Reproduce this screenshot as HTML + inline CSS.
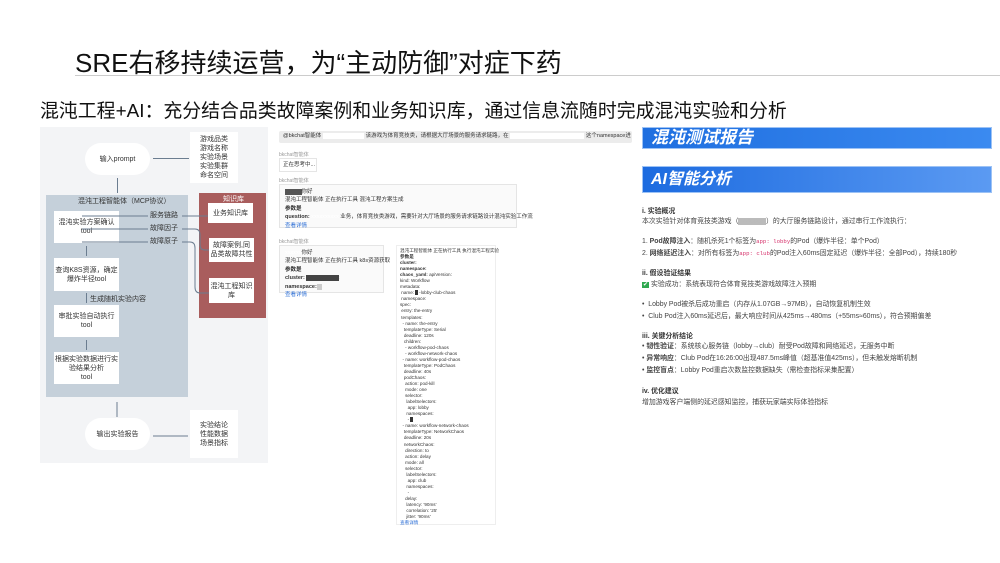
<!DOCTYPE html><html><head><meta charset="utf-8"><style>
*{margin:0;padding:0;box-sizing:border-box}
body{width:1000px;height:563px;background:#fff;position:relative;overflow:hidden;font-family:"Liberation Sans","Noto Sans CJK SC",sans-serif;color:#222}
.a{position:absolute}
.wb{position:absolute;background:#fff;display:flex;align-items:center;justify-content:center;text-align:center;font-size:7px;line-height:9px;color:#333}
.lbl{position:absolute;font-size:7px;color:#333}
.t{font-size:5.5px;color:#333;line-height:8.4px;white-space:nowrap}
.g{color:#999;font-size:5px}
.r{font-size:6.9px;color:#444;white-space:nowrap;position:absolute;left:642px}
.b{font-weight:bold;color:#333}
.pk{color:#d6336c;font-family:"Liberation Mono",monospace;font-size:5.7px}
</style></head><body>
<div class="a" style="left:75px;top:43px;font-size:26px;color:#111">SRE右移持续运营，为“主动防御”对症下药</div>
<div class="a" style="left:75px;top:75px;width:925px;height:1px;background:#ccc"></div>
<div class="a" style="left:40px;top:96px;font-size:18.9px;color:#111">混沌工程+AI：充分结合品类故障案例和业务知识库，通过信息流随时完成混沌实验和分析</div>

<!-- left diagram -->
<div class="a" style="left:40px;top:127px;width:228px;height:336px;background:#f3f4f6"></div>
<div class="wb" style="left:85px;top:143px;width:65px;height:32px;border-radius:16px">输入prompt</div>
<div class="wb" style="left:190px;top:132px;width:48px;height:51px">游戏品类<br>游戏名称<br>实验场景<br>实验集群<br>命名空间</div>
<div class="a" style="left:153px;top:158px;width:36px;height:1px;background:#6b7d90"></div>
<div class="a" style="left:117px;top:178px;width:1px;height:15px;background:#6b7d90"></div>
<div class="a" style="left:46px;top:195px;width:142px;height:202px;background:#c5d0da"></div>
<div class="lbl" style="left:78px;top:196px">混沌工程智能体（MCP协议）</div>
<div class="wb" style="left:54px;top:211px;width:65px;height:32px">混沌实验方案确认<br>tool</div>
<div class="wb" style="left:54px;top:258px;width:65px;height:33px">查询K8S资源，确定<br>爆炸半径tool</div>
<div class="wb" style="left:54px;top:305px;width:65px;height:32px">审批实验自动执行<br>tool</div>
<div class="wb" style="left:54px;top:352px;width:65px;height:32px">根据实验数据进行实<br>验结果分析<br>tool</div>
<div class="a" style="left:86px;top:246px;width:1px;height:10px;background:#6b7d90"></div>
<div class="a" style="left:86px;top:293px;width:1px;height:10px;background:#6b7d90"></div>
<div class="a" style="left:86px;top:340px;width:1px;height:10px;background:#6b7d90"></div>
<div class="lbl" style="left:90px;top:294px">生成随机实验内容</div>
<div class="a" style="left:199px;top:193px;width:67px;height:125px;background:#a95d5d"></div>
<div class="lbl" style="left:223px;top:194px;color:#fff">知识库</div>
<div class="wb" style="left:208px;top:203px;width:45px;height:20px">业务知识库</div>
<div class="wb" style="left:209px;top:238px;width:45px;height:24px">故障案例,同<br>品类故障共性</div>
<div class="wb" style="left:209px;top:278px;width:45px;height:25px">混沌工程知识<br>库</div>
<svg class="a" style="left:40px;top:127px" width="228" height="336"><g fill="none" stroke="#6b7d90" stroke-width="1">
<path d="M42 89H108M142 89H168"/><path d="M42 102H108M142 102H155Q160 102 160 108V118Q160 123 165 123H169"/><path d="M42 115H108M142 115H150Q155 115 155 121V160Q155 166 160 166H169"/>
<path d="M77 275V290M113 309H148"/></g></svg>
<div class="lbl" style="left:150px;top:210px;background:#c5d0da">服务链路</div>
<div class="lbl" style="left:150px;top:223px;background:#c5d0da">故障因子</div>
<div class="lbl" style="left:150px;top:236px;background:#c5d0da">故障原子</div>
<div class="wb" style="left:85px;top:418px;width:65px;height:32px;border-radius:16px">输出实验报告</div>
<div class="wb" style="left:190px;top:410px;width:48px;height:48px">实验结论<br>性能数据<br>场景指标</div>

<!-- middle chat -->
<div class="a" style="left:279px;top:131px;width:353px;height:12px;background:#ececec;border-radius:2px;overflow:hidden"></div>
<div class="a t" style="left:283px;top:132px;width:348px;overflow:hidden">@bkchat智能体 <span style="background:#fff;color:#fff">xxxxxxxxxxxxxxx</span> 该游戏为体育竞技类，请根据大厅场景的服务请求链路，在 <span style="background:#fff;color:#fff">xxxxxxxxxxxxxxxxxxxxxxxxxxx</span> 这个namespace进行混沌实验工作流</div>
<div class="a g" style="left:279px;top:151px">bkchat智能体</div>
<div class="a t" style="left:279px;top:158px;border:1px solid #e5e5e5;padding:2px 3px;width:38px;height:14px">正在思考中...</div>
<div class="a g" style="left:279px;top:177px">bkchat智能体</div>
<div class="a t" style="left:279px;top:184px;border:1px solid #e5e5e5;padding:3px 5px;width:238px;height:44px;background:#fafafa">
<span style="background:#555;color:#555">xxxxxx</span>你好<br>混沌工程智能体 正在执行工具 混沌工程方案生成<br><b>参数是</b><br><b>question:</b> <span style="color:#fff">xxxxxxxxxx</span> 业务，体育竞技类游戏，需要针对大厅场景的服务请求链路设计混沌实验工作流<br><span style="color:#2d6fd6">查看详情</span></div>
<div class="a g" style="left:279px;top:238px">bkchat智能体</div>
<div class="a t" style="left:279px;top:245px;border:1px solid #e5e5e5;padding:3px 5px;width:105px;height:48px;background:#fafafa">
<span style="color:#fff">xxxxxx</span>你好<br>混沌工程智能体 正在执行工具 k8s资源获取<br><b>参数是</b><br><b>cluster:</b> <span style="background:#444;color:#444">xxxxxxxxxxxx</span><br><b>namespace:</b><span style="background:#ccc;color:#ccc">xx</span><br><span style="color:#2d6fd6">查看详情</span></div>
<div class="a t" style="left:396px;top:245px;width:100px;height:280px;border:1px solid #eee;padding:2px 3px;font-size:4.6px;line-height:6.05px">
混沌工程智能体 正在执行工具 执行混沌工程实验<br><b>参数是</b><br><b>cluster:</b><br><b>namespace:</b><br><b>chaos_yaml:</b> apiVersion:<br>kind: Workflow<br>metadata:<br>&nbsp;name: <span style="background:#333">&nbsp;&nbsp;</span> -lobby-club-chaos<br>&nbsp;namespace:<br>spec:<br>&nbsp;entry: the-entry<br>&nbsp;templates:<br>&nbsp;&nbsp;- name: the-entry<br>&nbsp;&nbsp;&nbsp;templateType: Serial<br>&nbsp;&nbsp;&nbsp;deadline: 120s<br>&nbsp;&nbsp;&nbsp;children:<br>&nbsp;&nbsp;&nbsp;&nbsp;- workflow-pod-chaos<br>&nbsp;&nbsp;&nbsp;&nbsp;- workflow-network-chaos<br>&nbsp;&nbsp;- name: workflow-pod-chaos<br>&nbsp;&nbsp;&nbsp;templateType: PodChaos<br>&nbsp;&nbsp;&nbsp;deadline: 40s<br>&nbsp;&nbsp;&nbsp;podChaos:<br>&nbsp;&nbsp;&nbsp;&nbsp;action: pod-kill<br>&nbsp;&nbsp;&nbsp;&nbsp;mode: one<br>&nbsp;&nbsp;&nbsp;&nbsp;selector:<br>&nbsp;&nbsp;&nbsp;&nbsp;&nbsp;labelSelectors:<br>&nbsp;&nbsp;&nbsp;&nbsp;&nbsp;&nbsp;app: lobby<br>&nbsp;&nbsp;&nbsp;&nbsp;&nbsp;namespaces:<br>&nbsp;&nbsp;&nbsp;&nbsp;&nbsp;&nbsp;- <span style="background:#333">&nbsp;&nbsp;</span><br>&nbsp;&nbsp;- name: workflow-network-chaos<br>&nbsp;&nbsp;&nbsp;templateType: NetworkChaos<br>&nbsp;&nbsp;&nbsp;deadline: 20s<br>&nbsp;&nbsp;&nbsp;networkChaos:<br>&nbsp;&nbsp;&nbsp;&nbsp;direction: to<br>&nbsp;&nbsp;&nbsp;&nbsp;action: delay<br>&nbsp;&nbsp;&nbsp;&nbsp;mode: all<br>&nbsp;&nbsp;&nbsp;&nbsp;selector:<br>&nbsp;&nbsp;&nbsp;&nbsp;&nbsp;labelSelectors:<br>&nbsp;&nbsp;&nbsp;&nbsp;&nbsp;&nbsp;app: club<br>&nbsp;&nbsp;&nbsp;&nbsp;&nbsp;namespaces:<br>&nbsp;&nbsp;&nbsp;&nbsp;&nbsp;&nbsp;-<br>&nbsp;&nbsp;&nbsp;&nbsp;delay:<br>&nbsp;&nbsp;&nbsp;&nbsp;&nbsp;latency: '90ms'<br>&nbsp;&nbsp;&nbsp;&nbsp;&nbsp;correlation: '25'<br>&nbsp;&nbsp;&nbsp;&nbsp;&nbsp;jitter: '90ms'<br><span style="color:#2d6fd6">查看详情</span></div>

<!-- right report -->
<div class="a" style="left:642px;top:127px;width:350px;height:22px;background:linear-gradient(90deg,#1f6fe0,#3b8af0);border:1px solid #9cc2f5;color:#fff;font-weight:bold;font-size:17px;line-height:20px;padding-left:8px;font-style:italic">混沌测试报告</div>
<div class="a" style="left:642px;top:166px;width:350px;height:27px;background:linear-gradient(90deg,#1c6be0,#5b9af2);border:1px solid #9cc2f5;color:#fff;font-weight:bold;font-size:16px;line-height:25px;padding-left:8px;font-style:italic">AI智能分析</div>
<div class="r b" style="top:205px">i. 实验概况</div>
<div class="r" style="top:215px">本次实验针对体育竞技类游戏（<span style="background:#bbb;color:#bbb">xxxxxxxx</span>）的大厅服务链路设计，通过串行工作流执行：</div>
<div class="r" style="top:235px">1. <b>Pod故障注入</b>：随机杀死1个标签为<span class="pk">app: lobby</span>的Pod（爆炸半径：单个Pod）</div>
<div class="r" style="top:247px">2. <b>网络延迟注入</b>：对所有标签为<span class="pk">app: club</span>的Pod注入60ms固定延迟（爆炸半径：全部Pod），持续180秒</div>
<div class="r b" style="top:267px">ii. 假设验证结果</div>
<div class="r" style="top:278px"><span style="background:#2fa84f;color:#fff;font-size:6px;padding:0 1px">✔</span> 实验成功：系统表现符合体育竞技类游戏故障注入预期</div>
<div class="r" style="top:298px">• &nbsp;Lobby Pod被杀后成功重启（内存从1.07GB→97MB），自动恢复机制生效</div>
<div class="r" style="top:310px">• &nbsp;Club Pod注入60ms延迟后，最大响应时间从425ms→480ms（+55ms≈60ms），符合预期偏差</div>
<div class="r b" style="top:330px">iii. 关键分析结论</div>
<div class="r" style="top:340px">• <b>韧性验证</b>：系统核心服务链（lobby→club）耐受Pod故障和网络延迟，无服务中断</div>
<div class="r" style="top:352px">• <b>异常响应</b>：Club Pod在16:26:00出现487.5ms峰值（超基准值425ms），但未触发熔断机制</div>
<div class="r" style="top:364px">• <b>监控盲点</b>：Lobby Pod重启次数监控数据缺失（需检查指标采集配置）</div>
<div class="r b" style="top:385px">iv. 优化建议</div>
<div class="r" style="top:396px">增加游戏客户端侧的延迟感知监控，捕获玩家端实际体验指标</div>
</body></html>
